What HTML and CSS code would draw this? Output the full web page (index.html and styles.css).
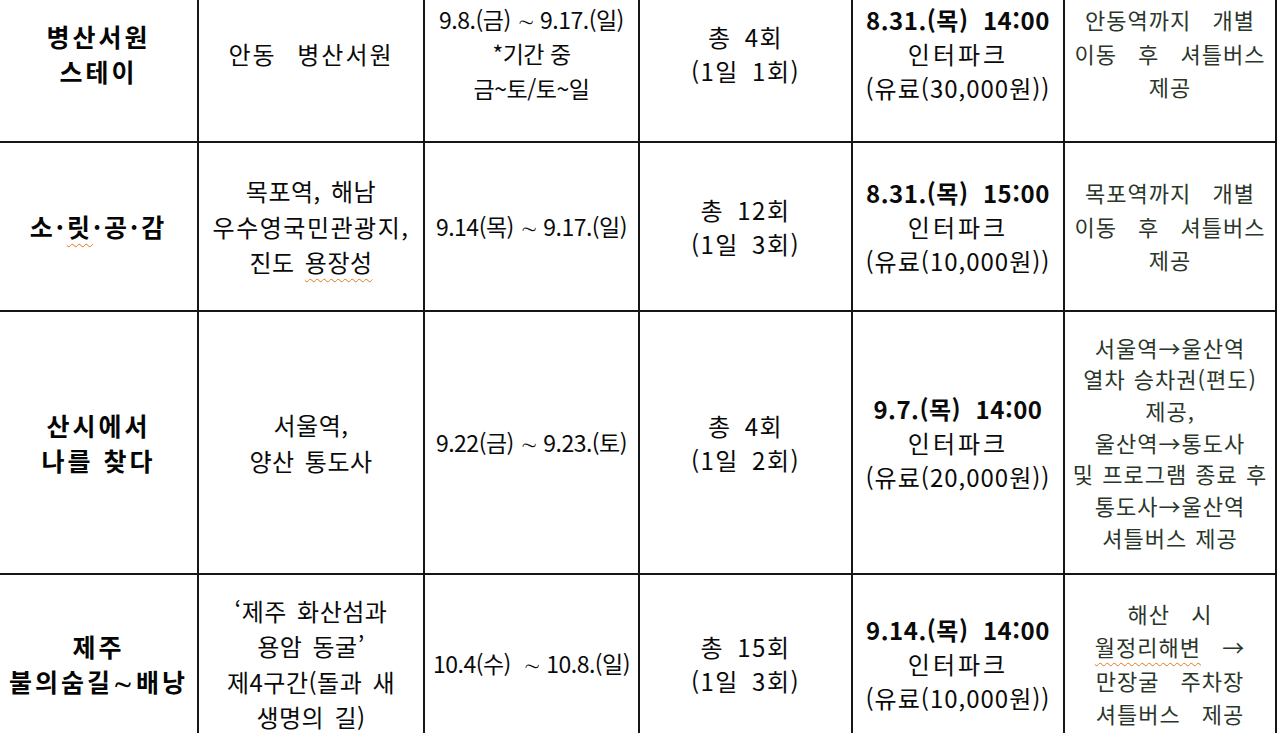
FILE: index.html
```html
<!DOCTYPE html>
<html lang="ko">
<head>
<meta charset="utf-8">
<title>프로그램 일정</title>
<link rel="stylesheet" href="styles.css">
</head>
<body>
<table class="sched">
  <colgroup>
    <col class="w1"><col class="w2"><col class="w3"><col class="w4"><col class="w5"><col class="w6">
  </colgroup>
  <tbody>
    <tr class="r1">
      <td class="c-title">병산서원<br>스테이</td>
      <td class="c-place wide">안동 병산서원</td>
      <td class="c-date">9.8.(금) ∼ 9.17.(일)<br>*기간 중<br>금~토/토~일</td>
      <td class="c-count">총 4회<br>(1일 1회)</td>
      <td class="c-book"><b>8.31.(목) &nbsp;14:00</b><br><span class="site">인터파크</span><br>(유료(30,000원))</td>
      <td class="c-trans">안동역까지 개별<br>이동 후 셔틀버스<br>제공</td>
    </tr>
    <tr class="r2">
      <td class="c-title">소·<span class="spell">릿</span>·공·감</td>
      <td class="c-place">목포역, 해남<br><span class="squeeze">우수영국민관광지,</span><br>진도 <span class="spell">용장성</span></td>
      <td class="c-date">9.14(목) ∼ 9.17.(일)</td>
      <td class="c-count">총 12회<br>(1일 3회)</td>
      <td class="c-book"><b>8.31.(목) &nbsp;15:00</b><br><span class="site">인터파크</span><br>(유료(10,000원))</td>
      <td class="c-trans">목포역까지 개별<br>이동 후 셔틀버스<br>제공</td>
    </tr>
    <tr class="r3">
      <td class="c-title">산시에서<br>나를 찾다</td>
      <td class="c-place">서울역,<br>양산 통도사</td>
      <td class="c-date">9.22(금) ∼ 9.23.(토)</td>
      <td class="c-count">총 4회<br>(1일 2회)</td>
      <td class="c-book"><b>9.7.(목) &nbsp;14:00</b><br><span class="site">인터파크</span><br>(유료(20,000원))</td>
      <td class="c-trans tight">서울역→울산역<br>열차 승차권(편도)<br>제공,<br>울산역→통도사<br>및 프로그램 종료 후<br>통도사→울산역<br>셔틀버스 제공</td>
    </tr>
    <tr class="r4">
      <td class="c-title">제주<br>불의숨길∼배낭</td>
      <td class="c-place">‘제주 화산섬과<br>용암 동굴’<br>제4구간(돌과 새<br>생명의 길)</td>
      <td class="c-date">10.4(수) &nbsp;∼ 10.8.(일)</td>
      <td class="c-count">총 15회<br>(1일 3회)</td>
      <td class="c-book"><b>9.14.(목) &nbsp;14:00</b><br><span class="site">인터파크</span><br>(유료(10,000원))</td>
      <td class="c-trans">해산 시<br><span class="spell">월정리해변</span> →<br>만장굴 주차장<br>셔틀버스 제공</td>
    </tr>
  </tbody>
</table>
</body>
</html>
```

FILE: styles.css
```css
html, body {
  margin: 0;
  padding: 0;
  background: #ffffff;
}

body {
  font-family: "Noto Sans CJK KR", "Noto Sans", sans-serif;
  color: #0a0a0a;
  overflow: hidden;
}

.sched {
  border-collapse: collapse;
  table-layout: fixed;
  width: 1279px;
  margin: -36px 0 0 -2px;
}

.w1 { width: 199px; }
.w2 { width: 226px; }
.w3 { width: 215px; }
.w4 { width: 213px; }
.w5 { width: 212px; }
.w6 { width: 212px; }

.r1 { height: 177px; }
.r2 { height: 169px; }
.r3 { height: 263px; }
.r4 { height: 179px; }

.sched td {
  border: 2px solid #161616;
  padding: 0;
  text-align: center;
  vertical-align: middle;
  font-size: 24px;
  line-height: 34px;
  white-space: nowrap;
}

.sched td.c-title {
  font-weight: 700;
  font-size: 25px;
  letter-spacing: 3px;
  line-height: 35px;
  color: #050505;
}

.sched td.c-place {
  letter-spacing: 0.5px;
  word-spacing: 3px;
  line-height: 35.5px;
}

.sched td.c-place.wide {
  letter-spacing: 2px;
  word-spacing: 12px;
}

.squeeze {
  letter-spacing: 1.5px;
}

.sched td.c-date {
  font-size: 23px;
  letter-spacing: -0.5px;
  line-height: 34.5px;
}

.sched td.c-count {
  letter-spacing: 1.5px;
  word-spacing: 5px;
}

.sched td.c-book {
  line-height: 34px;
  letter-spacing: 1px;
}

.c-book b {
  font-weight: 700;
  letter-spacing: 0.5px;
}

.c-book .site {
  letter-spacing: 3px;
}

.sched td.c-trans {
  font-size: 22px;
  color: #2a362a;
  letter-spacing: 1px;
  word-spacing: 14px;
  line-height: 33.5px;
}

.sched td.tight {
  line-height: 31.7px;
  letter-spacing: 1px;
  word-spacing: 1px;
}

.spell {
  text-decoration: underline wavy #e0781c;
  text-decoration-thickness: 1px;
  text-underline-offset: 6px;
}
```
